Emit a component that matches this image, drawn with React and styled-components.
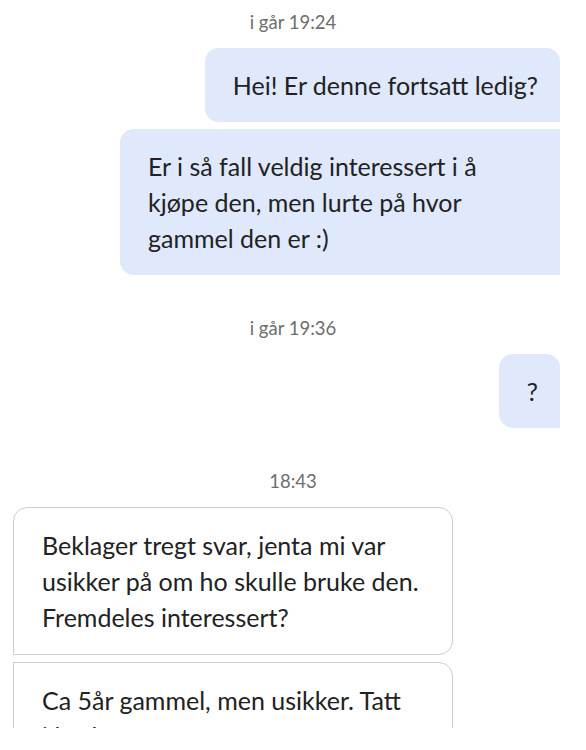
import React from 'react';
import styled, { createGlobalStyle } from 'styled-components';

const GlobalStyle = createGlobalStyle`
    body {
        margin: 0;
        background: #fff;
        font-family: Lato, "Noto Sans", sans-serif;
        color: #222;
    }
`;

const Thread = styled.main`
    width: 586px;
    height: 728px;
    overflow: hidden;
    padding-top: 11px;
    box-sizing: border-box;
`;

const Group = styled.section`
    display: flex;
    flex-direction: column;
    gap: 7px;
    & + & {
        margin-top: 42px;
    }
`;

const Stamp = styled.div`
    text-align: center;
    font-size: 18.5px;
    line-height: 22px;
    color: #6e6e6e;
    margin-bottom: 8px;
`;

const Row = styled.div`
    display: flex;
    justify-content: ${(p) => (p.$mine ? 'flex-end' : 'flex-start')};
    padding: ${(p) => (p.$mine ? '0 26px 0 0' : '0 0 0 13px')};
`;

const Bubble = styled.div`
    box-sizing: border-box;
    width: ${(p) => (p.$wide ? '440px' : 'auto')};
    padding: 19px 22px 19px 28px;
    font-size: 25px;
    line-height: 36px;
    white-space: nowrap;
    background: ${(p) => (p.$mine ? '#dfe9fb' : '#fff')};
    border: ${(p) => (p.$mine ? 'none' : '1.5px solid #cdcdcd')};
    border-radius: ${(p) => {
        if (p.$mine) return p.$first ? '14px 14px 0 14px' : '14px 0 0 14px';
        return p.$first ? '14px 14px 14px 0' : '0 14px 14px 0';
    }};
`;

const groups = [
    {
        stamp: 'i går 19:24',
        mine: true,
        messages: [
            { lines: ['Hei! Er denne fortsatt ledig?'] },
            { lines: ['Er i så fall veldig interessert i å', 'kjøpe den, men lurte på hvor', 'gammel den er :)'], wide: true },
        ],
    },
    {
        stamp: 'i går 19:36',
        mine: true,
        messages: [{ lines: ['?'] }],
    },
    {
        stamp: '18:43',
        mine: false,
        messages: [
            { lines: ['Beklager tregt svar, jenta mi var', 'usikker på om ho skulle bruke den.', 'Fremdeles interessert?'], wide: true },
            { lines: ['Ca 5år gammel, men usikker. Tatt', 'i bruk noen ganger.'], wide: true },
        ],
    },
];

export default function App() {
    return (
        <>
            <GlobalStyle />
            <Thread>
                {groups.map((g, gi) => (
                    <Group key={gi}>
                        <Stamp>{g.stamp}</Stamp>
                        {g.messages.map((m, mi) => (
                            <Row key={mi} $mine={g.mine}>
                                <Bubble $mine={g.mine} $first={mi === 0} $wide={m.wide}>
                                    {m.lines.map((l, li) => (
                                        <React.Fragment key={li}>
                                            {li > 0 && <br />}
                                            {l}
                                        </React.Fragment>
                                    ))}
                                </Bubble>
                            </Row>
                        ))}
                    </Group>
                ))}
            </Thread>
        </>
    );
}
